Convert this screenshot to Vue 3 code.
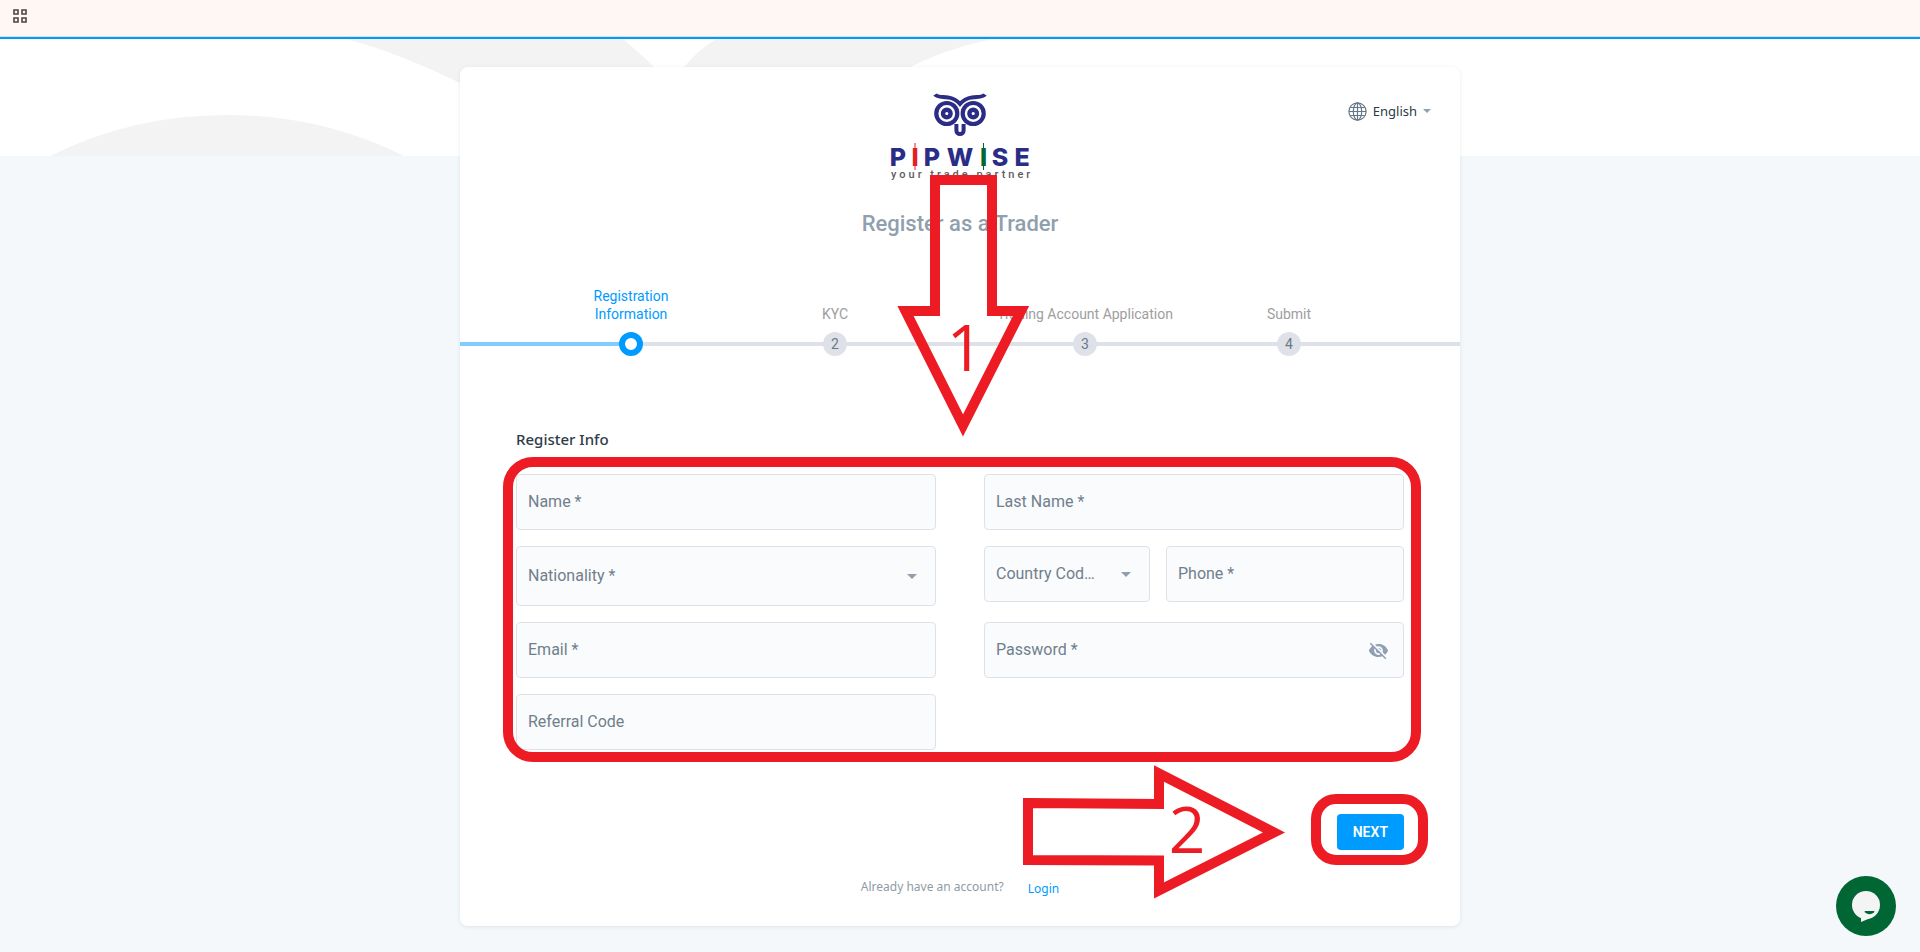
<template>
  <div class="page">
    <header class="top-bar">
      <button class="apps-btn" type="button" aria-label="Apps">
        <svg width="14" height="14" viewBox="0 0 14 14" fill="none" stroke="#4a4644" stroke-width="1.600">
          <path d="M1 1h4v4H1zM9 1h4v4H9zM1 9h4v4H1zM9 9h4v4H9z" />
        </svg>
      </button>
    </header>

    <svg class="hero" viewBox="0 0 1920 117" preserveAspectRatio="xMinYMin slice" fill="#f3f3f3" aria-hidden="true">
      <path d="M50 117Q132 76 227 76T404 117Z" />
      <path d="M346 0Q400 14 468 48V28H654Q641 15 623 0Z" />
      <path d="M716 0Q697 12 684 28H911Q945 10 993 0Z" />
    </svg>

    <main class="card">
      <div class="card-header">
        <svg class="logo" width="150" height="88" viewBox="885 93 150 88" role="img" aria-label="Pipwise">
          <g fill="none" stroke="#2b2c86">
            <circle cx="946.800" cy="113.500" r="10.500" stroke-width="4.200" />
            <circle cx="973.200" cy="113.500" r="10.500" stroke-width="4.200" />
            <circle cx="946.800" cy="113.500" r="3.800" stroke-width="4.400" />
            <circle cx="973.200" cy="113.500" r="3.800" stroke-width="4.400" />
            <path d="M935 94.500C937 97.500 942 96.600 948 97.400C954 98.500 957 100.500 960 104C963 100.500 966 98.500 972 97.400C978 96.600 983 97.500 985 94.500" stroke-width="4" />
            <path d="M956.400 124V130.500A3.600 3.600 0 0 0 963.600 130.500V124" stroke-width="4" />
          </g>
          <path d="M915 143V170" stroke="#e31e24" stroke-width="1" />
          <path d="M983.500 143V170" stroke="#006633" stroke-width="1" />
          <g class="logo-name" text-anchor="middle">
            <text x="898" y="166">P</text>
            <text class="red" x="915" y="166">I</text>
            <text x="932" y="166">P</text>
            <text x="960" y="166">W</text>
            <text class="green" x="983.500" y="166">I</text>
            <text x="1000" y="166">S</text>
            <text x="1022" y="166">E</text>
          </g>
          <text class="logo-slogan" x="891" y="178">your trade partner</text>
        </svg>
        <button class="lang" type="button">
          <svg width="19" height="19" viewBox="0 0 19 19" fill="none" stroke="#667886" stroke-width="1.200">
            <circle cx="9.500" cy="9.500" r="8.600" />
            <ellipse cx="9.500" cy="9.500" rx="4.200" ry="8.600" />
            <path d="M9.500 1V18M1 9.500H18M2.300 5.500H16.700M2.300 13.500H16.700" />
          </svg>
          <span>English</span>
          <svg width="8" height="4" viewBox="0 0 8 4" fill="#8fa0ae"><path d="M0 0h8L4 4z" /></svg>
        </button>
      </div>

      <h1 class="title">Register as a Trader</h1>

      <ol class="stepper">
        <li
          v-for="(step, index) in steps"
          :key="step"
          class="step"
          :class="{ active: index === currentStep }"
        >
          <span class="step-label">{{ step }}</span>
          <span class="step-dot">{{ index === currentStep ? '' : index + 1 }}</span>
        </li>
      </ol>

      <form class="form" @submit.prevent>
        <h2 class="section-title">Register Info</h2>
        <div class="fields">
          <div class="field">
            <input id="name" v-model="form.name" type="text" />
            <label v-show="!form.name" for="name">Name *</label>
          </div>
          <div class="field">
            <input id="lastName" v-model="form.lastName" type="text" />
            <label v-show="!form.lastName" for="lastName">Last Name *</label>
          </div>
          <div class="field tall">
            <select id="nationality" v-model="form.nationality">
              <option value=""></option>
            </select>
            <label for="nationality">Nationality *</label>
            <svg class="caret" width="10" height="5" viewBox="0 0 10 5"><path d="M0 0h10L5 5z" /></svg>
          </div>
          <div class="phone-row">
            <div class="field code">
              <select id="countryCode" v-model="form.countryCode">
                <option value=""></option>
              </select>
              <label for="countryCode">Country Code *</label>
              <svg class="caret" width="10" height="5" viewBox="0 0 10 5"><path d="M0 0h10L5 5z" /></svg>
            </div>
            <div class="field phone">
              <input id="phone" v-model="form.phone" type="tel" />
              <label v-show="!form.phone" for="phone">Phone *</label>
            </div>
          </div>
          <div class="field">
            <input id="email" v-model="form.email" type="email" />
            <label v-show="!form.email" for="email">Email *</label>
          </div>
          <div class="field">
            <input id="password" v-model="form.password" :type="showPassword ? 'text' : 'password'" />
            <label v-show="!form.password" for="password">Password *</label>
            <button class="eye" type="button" aria-label="Toggle password" @click="showPassword = !showPassword">
              <svg width="21" height="21" viewBox="0 0 24 24" fill="#8fa0b0">
                <path d="M12 7c2.760 0 5 2.240 5 5 0 .650-.130 1.260-.360 1.830l2.920 2.920c1.510-1.260 2.700-2.890 3.430-4.750-1.730-4.390-6-7.500-11-7.500-1.400 0-2.740.250-3.980.700l2.160 2.160C10.740 7.130 11.350 7 12 7zM2 4.270l2.280 2.280.460.460C3.080 8.300 1.780 10.020 1 12c1.730 4.390 6 7.500 11 7.500 1.550 0 3.030-.300 4.380-.840l.420.420L19.730 22 21 20.730 3.270 3 2 4.270zM7.530 9.800l1.550 1.550c-.050.210-.080.430-.080.650 0 1.660 1.340 3 3 3 .220 0 .440-.030.650-.080l1.550 1.550c-.670.330-1.410.530-2.200.530-2.760 0-5-2.240-5-5 0-.790.200-1.530.530-2.200zm4.310-.780l3.150 3.150.020-.160c0-1.660-1.340-3-3-3l-.170.010z" />
              </svg>
            </button>
          </div>
          <div class="field">
            <input id="referral" v-model="form.referral" type="text" />
            <label v-show="!form.referral" for="referral">Referral Code</label>
          </div>
          <div class="mark mark-fields"></div>
        </div>

        <div class="actions">
          <div class="next-wrap">
            <button class="next-btn" type="submit">NEXT</button>
            <div class="mark mark-next"></div>
          </div>
        </div>
      </form>

      <p class="footer">
        <span>Already have an account?</span>
        <a href="#">Login</a>
      </p>

      <!-- guide arrows -->
      <svg class="arrow arrow-down" width="134" height="264" viewBox="896 174 134 264">
        <path d="M935 180H992V311H1021L963 425.500L905.500 311H935Z" />
        <text x="965" y="371">1</text>
      </svg>
      <svg class="arrow arrow-right" width="264" height="136" viewBox="1022 764 264 136">
        <path d="M1028 803L1159 804V773.500L1274 832.500L1159 890.500V860.500L1028 860Z" />
        <text x="1187" y="853">2</text>
      </svg>
    </main>

    <button class="chat" type="button" aria-label="Chat">
      <svg width="60" height="60" viewBox="0 0 60 60">
        <circle cx="30" cy="29" r="14" fill="#f4f4f4" />
        <path d="M25 40V46L37 41Z" fill="#f4f4f4" />
        <path d="M29 35H38Q39 35 38 36.500Q33.500 40 29 36.500Q28 35 29 35Z" fill="#006633" />
      </svg>
    </button>
  </div>
</template>

<script setup>
import { reactive, ref } from 'vue'

const steps = ['Registration Information', 'KYC', 'Trading Account Application', 'Submit']
const currentStep = ref(0)
const showPassword = ref(false)

const form = reactive({
  name: '',
  lastName: '',
  nationality: '',
  countryCode: '',
  phone: '',
  email: '',
  password: '',
  referral: ''
})
</script>

<style>
body {
  background: #f4f8fb;
}
</style>

<style scoped>
.page {
  font-family: Roboto, "Liberation Sans", sans-serif;
  min-height: 100vh;
}

* {
  box-sizing: border-box;
}

button {
  font-family: inherit;
  border: none;
  background: none;
  padding: 0;
  cursor: pointer;
}

svg {
  display: block;
}

.top-bar {
  display: flex;
  align-items: flex-start;
  height: 39px;
  background: #fff7f4;
  border-bottom: 2px solid #009bff;
  box-shadow: inset 0 -1px 0 #e6dcd9;
  padding: 9px 13px;
}

.hero {
  width: 100%;
  height: 117px;
  background: #fff;
}

/* Card */
.card {
  position: relative;
  max-width: 1000px;
  margin: -89px auto 26px;
  padding: 26px 0 25px;
  background: #fff;
  border-radius: 8px;
  box-shadow: 0 1px 4px rgba(60, 80, 100, 0.12);
}

.card-header {
  display: grid;
  grid-template-columns: 1fr auto 1fr;
  padding: 0 29px;
}

.logo {
  grid-column: 2;
}

.logo-name {
  font-family: Inter, sans-serif;
  font-size: 25px;
  font-weight: 800;
  fill: #2b2c86;
}

.logo-name .red {
  fill: #e31e24;
}

.logo-name .green {
  fill: #006633;
}

.logo-slogan {
  font-size: 11px;
  font-weight: 500;
  letter-spacing: 3px;
  fill: #5c5c60;
}

.lang {
  display: flex;
  align-items: center;
  justify-self: end;
  align-self: start;
  gap: 6px;
  padding-top: 8px;
  font-family: "Noto Sans", sans-serif;
  font-size: 13px;
  line-height: 20px;
  color: #2c3b48;
}

.title {
  margin: 29px 0 49px;
  font-size: 22px;
  font-weight: 500;
  line-height: 28px;
  text-align: center;
  color: #8f9fae;
}

/* Stepper */
.stepper {
  display: grid;
  grid-template-columns: 158fr 250fr 250fr 158fr;
  align-items: end;
  margin: 0;
  padding: 0 92px;
  list-style: none;
  background:
    linear-gradient(#80ccff, #80ccff) 0 calc(100% - 10px) / 171px 4px no-repeat,
    linear-gradient(#dee2e8, #dee2e8) 0 calc(100% - 10px) / 100% 4px no-repeat;
}

.step {
  display: flex;
  flex-direction: column;
  align-items: center;
  gap: 9px;
  font-size: 14px;
  line-height: 18px;
  color: #9e9e9e;
}

.step-label {
  text-align: center;
}

.step-dot {
  width: 24px;
  height: 24px;
  border-radius: 50%;
  background: #dee2e8;
  color: #6a7987;
  line-height: 24px;
  text-align: center;
}

.step.active .step-label {
  max-width: 90px;
  color: #009bff;
}

.step.active .step-dot {
  background: #fff;
  border: 6px solid #009bff;
}

/* Form */
.form {
  padding: 0 56px;
}

.section-title {
  margin: 71px 0 23px;
  font-family: "Noto Sans", sans-serif;
  font-size: 15px;
  font-weight: 500;
  line-height: 24px;
  color: #2f3b49;
}

.fields {
  position: relative;
  display: grid;
  grid-template-columns: 1fr 1fr;
  gap: 16px 48px;
}

.field {
  display: grid;
  grid-template-columns: 100%;
  align-items: center;
  align-self: start;
  height: 56px;
}

.field > * {
  grid-area: 1 / 1;
}

.field.tall {
  height: 60px;
}

.field input,
.field select {
  width: 100%;
  height: 100%;
  padding: 0 12px;
  font-family: inherit;
  font-size: 16px;
  color: #2f3b49;
  background: #fafbfd;
  border: 1px solid #dee2e8;
  border-radius: 4px;
  appearance: none;
}

.field input:focus,
.field select:focus {
  outline: none;
  border-color: #009bff;
}

.field label {
  padding: 0 50px 0 12px;
  font-size: 16px;
  line-height: 20px;
  color: #707f8c;
  white-space: nowrap;
  overflow: hidden;
  text-overflow: ellipsis;
  pointer-events: none;
}

.caret {
  justify-self: end;
  margin-right: 19px;
  fill: #8f9fae;
  pointer-events: none;
}

.eye {
  justify-self: end;
  margin-right: 15px;
}

.phone-row {
  display: flex;
  gap: 16px;
}

.code {
  flex: 166;
}

.phone {
  flex: 238;
}

.phone label {
  padding-right: 12px;
}

.actions {
  display: flex;
  justify-content: flex-end;
  margin-top: 64px;
}

.next-wrap {
  position: relative;
}

.next-btn {
  display: block;
  height: 36px;
  padding: 0 16px;
  font-size: 14px;
  font-weight: 600;
  color: #fff;
  background: #009bff;
  border-radius: 4px;
}

.footer {
  display: flex;
  justify-content: center;
  align-items: flex-start;
  gap: 24px;
  margin: 27px 0 0;
  font-family: "Noto Sans", sans-serif;
  font-size: 12px;
  line-height: 20px;
  color: #8f9ba5;
}

.footer a {
  line-height: 24px;
  color: #009bff;
  text-decoration: none;
}

/* Guide marks */
.mark {
  position: absolute;
  border: 10px solid #ed1c24;
  pointer-events: none;
}

.mark-fields {
  inset: -17px -17px -12px -13px;
  border-radius: 30px;
}

.mark-next {
  inset: -20px -24px -15px -26px;
  border-radius: 25px;
}

.arrow {
  position: absolute;
  pointer-events: none;
}

.arrow path {
  fill: none;
  stroke: #ed1c24;
  stroke-width: 10px;
  stroke-miterlimit: 10;
}

.arrow text {
  font-family: "Open Sans", sans-serif;
  font-size: 64px;
  text-anchor: middle;
  fill: #ed1c24;
}

.arrow-down {
  top: 107px;
  left: 436px;
}

.arrow-right {
  top: 697px;
  left: 562px;
}

.chat {
  position: fixed;
  right: 24px;
  bottom: 16px;
  width: 60px;
  height: 60px;
  border-radius: 50%;
  background: #006633;
}
</style>
